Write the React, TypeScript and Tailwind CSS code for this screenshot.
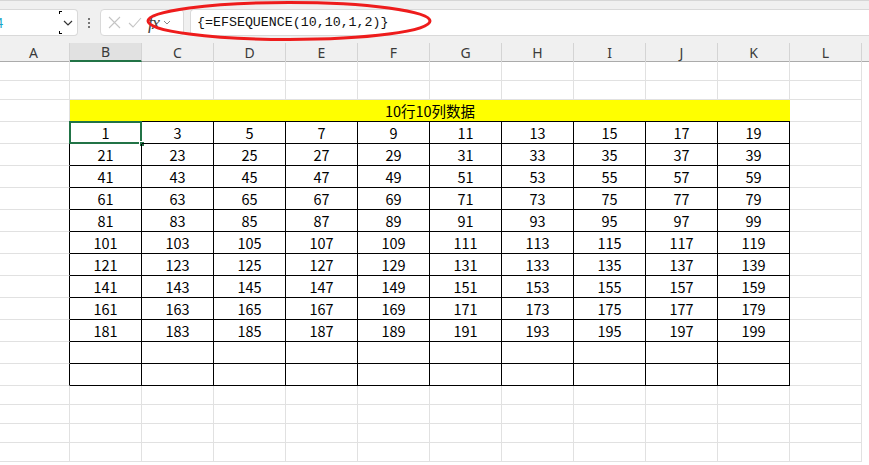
import React from 'react';

const cols = ['A', 'B', 'C', 'D', 'E', 'F', 'G', 'H', 'I', 'J', 'K', 'L'];

type Row = { h: string; kind: 'blank' | 'title' | 'data' | 'empty'; values?: number[] };

const rows: Row[] = [
  { h: 'h-[19px]', kind: 'blank' },
  { h: 'h-[19px]', kind: 'blank' },
  { h: 'h-[22px]', kind: 'title' },
  ...Array.from({ length: 10 }, (_, r) => ({
    h: 'h-[22px]',
    kind: 'data' as const,
    values: Array.from({ length: 10 }, (_, c) => 1 + 2 * (r * 10 + c)),
  })),
  { h: 'h-[22px]', kind: 'empty' },
  { h: 'h-[22px]', kind: 'empty' },
  { h: 'h-[19px]', kind: 'blank' },
  { h: 'h-[19px]', kind: 'blank' },
  { h: 'h-[19px]', kind: 'blank' },
  { h: 'h-[19px]', kind: 'blank' },
];

const cellFont = { fontFamily: '"Noto Sans CJK SC", "Noto Sans", sans-serif' };

const FormulaBar = () => (
  <div className="h-[36px] bg-[#f0f0f0] border-t border-[#d6d6d6] pt-[8px] flex items-stretch">
    {/* name box */}
    <div className="relative w-[78px] h-[27px] bg-white border border-l-0 border-[#d9d9d9] rounded-r-[4px] flex items-center">
      <span className="text-[13px] text-[#1aa6c8] -ml-[4px]" style={cellFont}>4</span>
      <div className="absolute left-[59px] top-[1px] w-[3px] h-[3px] border-l border-t border-black" />
      <div className="absolute left-[59px] bottom-[1px] w-[3px] h-[3px] border-l border-b border-black" />
      <svg className="absolute left-[63px] top-[10px]" width="10" height="6" viewBox="0 0 10 6">
        <path d="M1 1 L5 5 L9 1" fill="none" stroke="#333" strokeWidth="1.2" />
      </svg>
    </div>
    {/* more dots */}
    <div className="w-[22px] flex flex-col items-center justify-center gap-[2px]">
      <div className="w-[2px] h-[2px] bg-[#777]" />
      <div className="w-[2px] h-[2px] bg-[#777]" />
      <div className="w-[2px] h-[2px] bg-[#777]" />
    </div>
    {/* cancel / enter / fx */}
    <div className="w-[84px] h-[27px] bg-white border border-[#d9d9d9] rounded-[4px] flex items-center">
      <svg className="ml-[7px]" width="13" height="13" viewBox="0 0 13 13">
        <path d="M1 1 L12 12 M12 1 L1 12" stroke="#c4c4c4" strokeWidth="1.1" />
      </svg>
      <svg className="ml-[7px]" width="14" height="11" viewBox="0 0 14 11">
        <path d="M1 6 L5 10 L13 1" fill="none" stroke="#c4c4c4" strokeWidth="1.1" />
      </svg>
      <span className="ml-[6px] text-[18px] italic text-[#444] leading-none tracking-[-1px]" style={{ fontFamily: '"Liberation Serif", serif' }}>
        fx
      </span>
      <svg className="ml-[4px]" width="8" height="5" viewBox="0 0 8 5">
        <path d="M1 1 L4 4 L7 1" fill="none" stroke="#888" strokeWidth="1" />
      </svg>
    </div>
    {/* formula input */}
    <div className="ml-[6px] flex-1 h-[27px] bg-white border border-r-0 border-[#d9d9d9] rounded-l-[4px] flex items-center pl-[6px]">
      <span className="text-[13.3px] text-[#111]" style={{ fontFamily: '"Liberation Mono", "DejaVu Sans Mono", monospace' }}>
        {'{=EFSEQUENCE(10,10,1,2)}'}
      </span>
    </div>
  </div>
);

const HeaderRow = () => (
  <div className="h-[26px] bg-[#f0f0f0] pt-[7px] flex -ml-[2px] border-b border-[#ababab]">
    {cols.map((c) => (
      <div
        key={c}
        className={
          c === 'B'
            ? 'w-[72px] shrink-0 h-[19px] bg-[#e1e1e1] border-b-2 border-[#217346] border-r border-r-[#d4d4d4] flex items-center justify-center text-[14px] text-[#3a3a3a]'
            : 'w-[72px] shrink-0 h-[19px] border-r border-[#d4d4d4] flex items-center justify-center text-[14px] text-[#3a3a3a]'
        }
        style={{ fontFamily: '"Noto Sans", sans-serif' }}
      >
        {c}
      </div>
    ))}
  </div>
);

const GridRow = ({ row, index }: { row: Row; index: number }) => {
  const inTable = row.kind === 'data' || row.kind === 'empty';
  const firstData = index === 3;

  if (row.kind === 'title') {
    return (
      <div className={`${row.h} flex -ml-[2px]`}>
        <div className="w-[72px] shrink-0 border-r border-b border-[#e1e1e1]" />
        <div
          className="w-[720px] shrink-0 bg-[#ffff00] border-b border-black flex items-center justify-center text-[14.5px] text-black"
          style={cellFont}
        >
          10行10列数据
        </div>
        <div className="w-[72px] shrink-0 border-r border-b border-[#e1e1e1]" />
      </div>
    );
  }

  return (
    <div className={`${row.h} flex -ml-[2px]`}>
      {cols.map((c, ci) => {
        const tableCol = ci >= 1 && ci <= 10;
        const rightBlack = inTable && ci <= 10;
        const bottomBlack = inTable && tableCol;
        const cls = [
          'relative w-[72px] shrink-0 border-r border-b flex items-center justify-center text-[14.5px] text-black',
          rightBlack ? 'border-r-black' : 'border-r-[#e1e1e1]',
          bottomBlack ? 'border-b-black' : 'border-b-[#e1e1e1]',
        ].join(' ');
        const value = row.kind === 'data' && tableCol && row.values ? row.values[ci - 1] : null;
        return (
          <div key={c} className={cls} style={cellFont}>
            {value}
            {firstData && ci === 1 && (
              <>
                <div className="absolute -left-[1px] -top-[1px] -right-[1px] -bottom-[1px] border-2 border-[#217346]" />
                <div className="absolute -right-[4px] -bottom-[4px] w-[6px] h-[6px] bg-[#217346] border border-white" />
              </>
            )}
          </div>
        );
      })}
    </div>
  );
};

export default function App() {
  return (
    <div className="relative w-[869px] h-[465px] overflow-hidden bg-white">
      <FormulaBar />
      <HeaderRow />
      <div>
        {rows.map((row, i) => (
          <GridRow key={i} row={row} index={i} />
        ))}
      </div>
      {/* red annotation ring */}
      <svg className="absolute left-0 top-0 pointer-events-none" width="869" height="60" viewBox="0 0 869 60">
        <ellipse cx="289" cy="21" rx="141" ry="18.5" fill="none" stroke="#ee1c1c" strokeWidth="3" />
      </svg>
    </div>
  );
}
